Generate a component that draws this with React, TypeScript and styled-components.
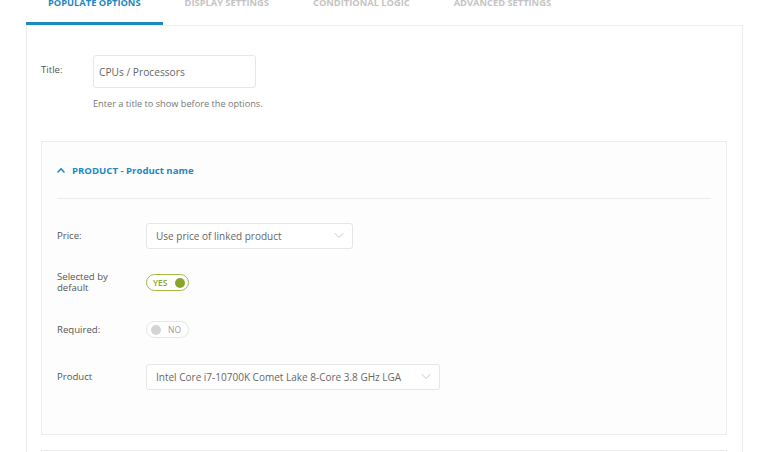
import React from 'react';
import { styled, createGlobalStyle } from 'styled-components';

const GlobalStyle = createGlobalStyle`
  html, body {
    margin: 0;
    padding: 0;
    background: #ffffff;
    font-family: 'Open Sans', 'Liberation Sans', sans-serif;
    overflow: hidden;
  }
`;

const tabs = ['Populate options', 'Display settings', 'Conditional logic', 'Advanced settings'];

const Chevron = ({ up }: { up?: boolean }) =>
  up ? (
    <svg width="8" height="6" viewBox="0 0 8 6" fill="none">
      <path d="M1 5 L4 1.8 L7 5" stroke="currentColor" strokeWidth={1.6} strokeLinecap="round" strokeLinejoin="round" />
    </svg>
  ) : (
    <svg width="10" height="7" viewBox="0 0 10 7" fill="none">
      <path d="M1 1.5 L5 5.5 L9 1.5" stroke="currentColor" strokeWidth={1} strokeLinecap="round" strokeLinejoin="round" />
    </svg>
  );

const App = () => {
  return (
    <Style.Page>
      <GlobalStyle />
      <Style.TabBar>
        {tabs.map((tab, idx) => (
          <Style.Tab key={'tab-' + idx} $active={idx === 0}>
            {tab}
          </Style.Tab>
        ))}
      </Style.TabBar>
      <Style.Panel>
        <Style.TitleRow>
          <Style.TitleLabel>Title:</Style.TitleLabel>
          <Style.TitleField>
            <Style.Input defaultValue="CPUs / Processors" />
            <Style.Help>Enter a title to show before the options.</Style.Help>
          </Style.TitleField>
        </Style.TitleRow>

        <Style.Card>
          <Style.CardHeader>
            <Chevron up />
            <span>PRODUCT - Product name</span>
          </Style.CardHeader>
          <Style.CardBody>
            <Style.Row>
              <Style.Label>Price:</Style.Label>
              <Style.Select $width={207}>
                <span>Use price of linked product</span>
                <Style.SelectArrow>
                  <Chevron />
                </Style.SelectArrow>
              </Style.Select>
            </Style.Row>
            <Style.Row>
              <Style.Label $tight>
                Selected by
                <br />
                default
              </Style.Label>
              <Style.Toggle $on>
                <span>YES</span>
                <Style.Knob $on />
              </Style.Toggle>
            </Style.Row>
            <Style.Row>
              <Style.Label>Required:</Style.Label>
              <Style.Toggle>
                <Style.Knob />
                <span>NO</span>
              </Style.Toggle>
            </Style.Row>
            <Style.Row>
              <Style.Label>Product</Style.Label>
              <Style.Select $width={294}>
                <span>Intel Core i7-10700K Comet Lake 8-Core 3.8 GHz LGA</span>
                <Style.SelectArrow>
                  <Chevron />
                </Style.SelectArrow>
              </Style.Select>
            </Style.Row>
          </Style.CardBody>
        </Style.Card>

        <Style.NextCard />
      </Style.Panel>
    </Style.Page>
  );
};

export default App;

const Style = {
  Page: styled.div`
    width: 769px;
    height: 452px;
    padding-left: 26px;
    box-sizing: border-box;
    overflow: hidden;
  `,
  TabBar: styled.div`
    display: flex;
    margin-top: -3px;
  `,
  Tab: styled.div<{ $active?: boolean }>`
    padding: 0 22px;
    height: 25px;
    font-size: 9.3px;
    line-height: 12px;
    font-weight: 700;
    text-transform: uppercase;
    color: ${({ $active }) => ($active ? '#1d88c2' : '#c4c4c4')};
    border-bottom: 3px solid ${({ $active }) => ($active ? '#1d88c2' : 'transparent')};
  `,
  Panel: styled.div`
    width: 717px;
    height: 460px;
    box-sizing: border-box;
    border: 1px solid #ececec;
    border-top-color: #f0f0f0;
    padding: 29px 14px 0 14px;
    display: flex;
    flex-direction: column;
  `,
  TitleRow: styled.div`
    display: flex;
    align-items: flex-start;
  `,
  TitleLabel: styled.div`
    width: 52px;
    padding-top: 8px;
    font-size: 9.6px;
    color: #555;
  `,
  TitleField: styled.div`
    display: flex;
    flex-direction: column;
    gap: 9px;
  `,
  Input: styled.input`
    width: 163px;
    height: 33px;
    box-sizing: border-box;
    border: 1px solid #e6e6e6;
    border-radius: 3px;
    padding: 0 5px;
    font-family: inherit;
    font-size: 10.2px;
    color: #666;
    outline: none;
  `,
  Help: styled.div`
    font-size: 9.2px;
    color: #777;
  `,
  Card: styled.div`
    margin-top: 31px;
    width: 686px;
    box-sizing: border-box;
    border: 1px solid #ececec;
    background: #fdfdfd;
    padding: 0 15px;
  `,
  CardHeader: styled.div`
    height: 56px;
    display: flex;
    align-items: center;
    gap: 7px;
    color: #1d88c2;
    font-size: 9.6px;
    font-weight: 700;
    border-bottom: 1px solid #ececec;
  `,
  CardBody: styled.div`
    padding: 13px 0 34px;
    display: flex;
    flex-direction: column;
  `,
  Row: styled.div`
    height: 47px;
    display: flex;
    align-items: center;
  `,
  Label: styled.div<{ $tight?: boolean }>`
    width: 89px;
    font-size: 9.6px;
    line-height: ${({ $tight }) => ($tight ? '10.5px' : '12px')};
    color: #555;
  `,
  Select: styled.div<{ $width: number }>`
    width: ${({ $width }) => $width}px;
    height: 26px;
    box-sizing: border-box;
    border: 1px solid #e6e6e6;
    border-radius: 3px;
    background: #fff;
    display: flex;
    align-items: center;
    justify-content: space-between;
    padding: 0 8px 0 9px;
    font-size: 10px;
    color: #666;
  `,
  SelectArrow: styled.span`
    color: #c8c8c8;
    display: flex;
  `,
  Toggle: styled.div<{ $on?: boolean }>`
    width: 43px;
    height: 17px;
    box-sizing: border-box;
    border: 1px solid ${({ $on }) => ($on ? '#a3bb45' : '#e6e6e6')};
    border-radius: 9px;
    background: #fff;
    display: flex;
    align-items: center;
    justify-content: space-between;
    padding: ${({ $on }) => ($on ? '0 3px 0 6px' : '0 7px 0 4px')};
    font-size: 8.5px;
    font-weight: ${({ $on }) => ($on ? 600 : 500)};
    color: ${({ $on }) => ($on ? '#8aa52c' : '#999')};
  `,
  Knob: styled.span<{ $on?: boolean }>`
    width: 10px;
    height: 10px;
    border-radius: 50%;
    background: ${({ $on }) => ($on ? '#8aa52c' : '#d4d4d4')};
  `,
  NextCard: styled.div`
    margin-top: 15px;
    width: 686px;
    height: 40px;
    box-sizing: border-box;
    border: 1px solid #ececec;
  `,
};
